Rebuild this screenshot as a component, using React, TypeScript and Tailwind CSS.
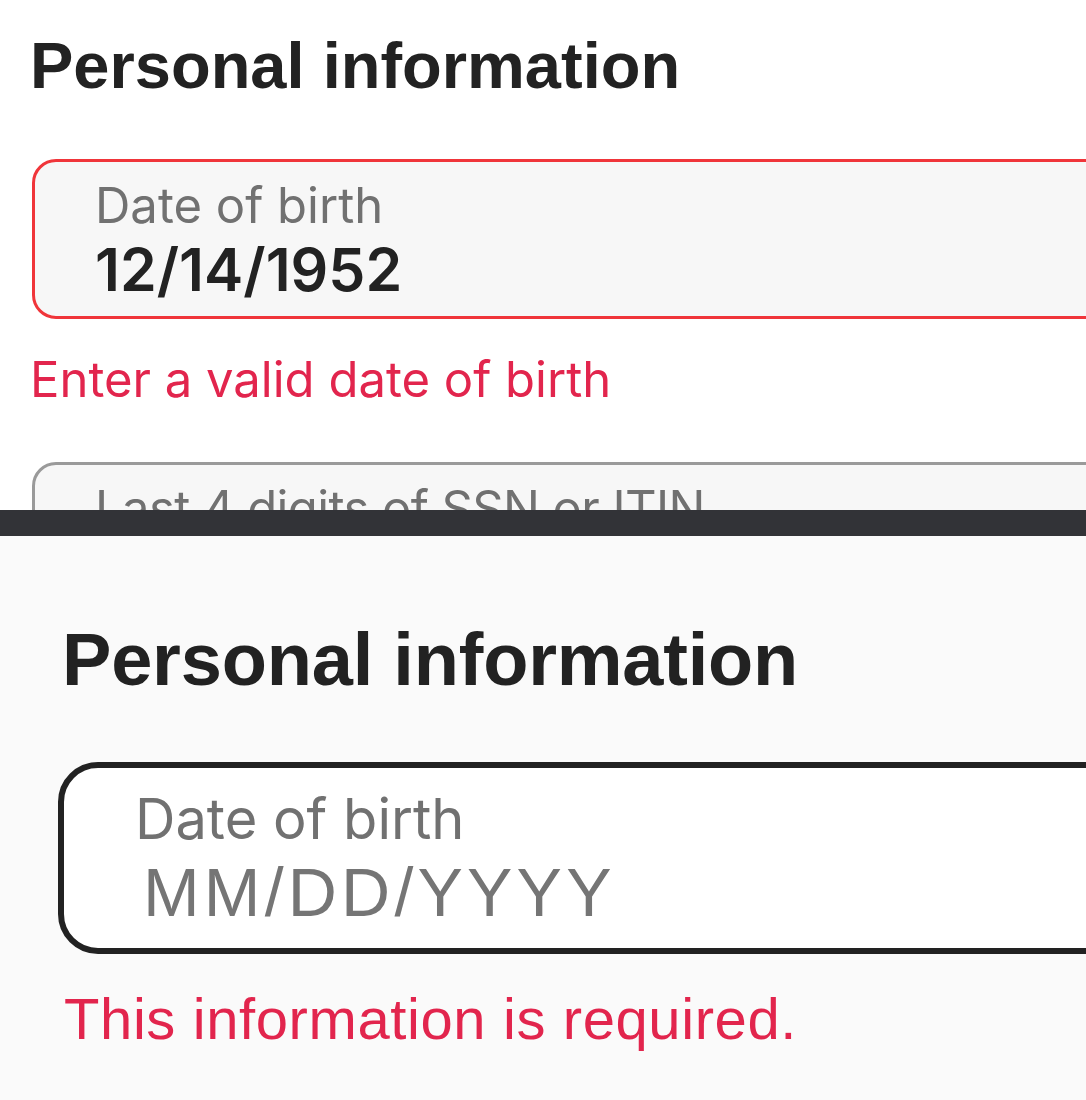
const arial = "font-['Liberation_Sans',Arial,sans-serif]";
const inter = "font-['Inter','Noto_Sans',sans-serif]";

function ErrorStateShot() {
  return (
    <section className="h-[510px] overflow-hidden bg-white">
      <h1 className={`${arial} pl-[30px] pt-[33px] text-[65px] leading-[65px] font-bold text-[#222222]`}>
        Personal information
      </h1>
      <div className="ml-[32px] mt-[61px] h-[160px] w-[1100px] rounded-[24px] border-[3px] border-[#f0353a] bg-[#f7f7f7] pl-[60px] pt-[19px]">
        <div className={`${inter} text-[49px] leading-[49px] text-[#717171]`}>Date of birth</div>
        <div className={`${inter} mt-[10px] text-[59px] leading-[59px] font-semibold text-[#222222]`}>
          12/14/1952
        </div>
      </div>
      <p className={`${inter} pl-[30px] pt-[36px] text-[49px] leading-[49px] text-[#e2254d]`}>
        Enter a valid date of birth
      </p>
      <div className="ml-[32px] mt-[58px] h-[160px] w-[1100px] rounded-[24px] border-[3px] border-[#9a9a9a] bg-[#f7f7f7] pl-[60px] pt-[19px]">
        <div className={`${inter} text-[49px] leading-[49px] tracking-[-0.6px] text-[#717171]`}>
          Last 4 digits of SSN or ITIN
        </div>
      </div>
    </section>
  );
}

function EmptyStateShot() {
  return (
    <section className="h-[564px] overflow-hidden bg-[#fafafa]">
      <h1 className={`${arial} pl-[62px] pt-[87px] text-[74px] leading-[74px] font-bold tracking-[-0.2px] text-[#222222]`}>
        Personal information
      </h1>
      <div className="ml-[58px] mt-[65px] h-[192px] w-[1100px] rounded-[40px] border-[6px] border-[#222222] bg-white pl-[71px] pt-[23px]">
        <div className={`${inter} text-[56px] leading-[56px] text-[#717171]`}>Date of birth</div>
        <div className={`${arial} ml-[8px] mt-[11px] text-[68px] leading-[68px] tracking-[4.2px] text-[#757575]`}>
          MM/DD/YYYY
        </div>
      </div>
      <p className={`${arial} pl-[64px] pt-[36px] text-[58px] leading-[58px] tracking-[0.6px] text-[#e2254d]`}>
        This information is required.
      </p>
    </section>
  );
}

export default function App() {
  return (
    <div className="w-[1086px] h-[1100px] overflow-hidden">
      <ErrorStateShot />
      <div className="h-[26px] bg-[#323337]" />
      <EmptyStateShot />
    </div>
  );
}
